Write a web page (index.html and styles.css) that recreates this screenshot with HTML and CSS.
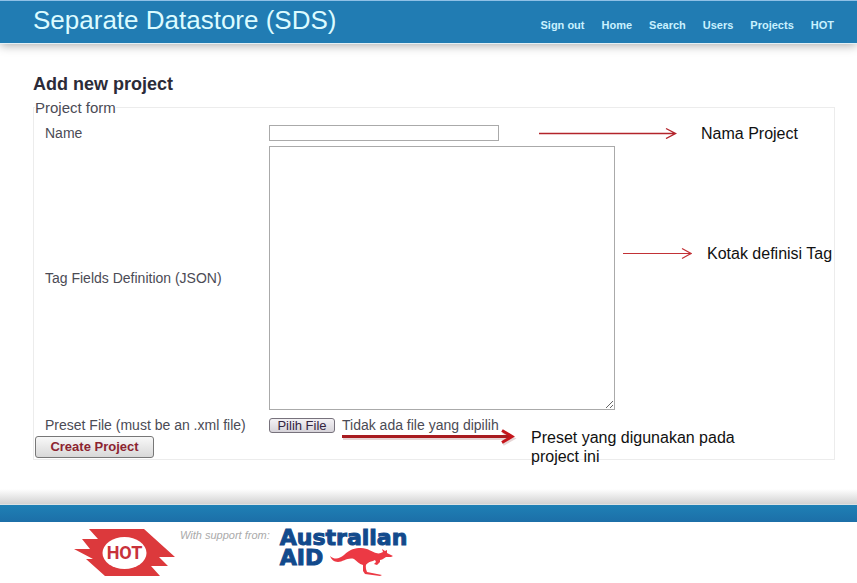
FILE: index.html
```html
<!DOCTYPE html>
<html lang="id">
<head>
<meta charset="utf-8">
<meta name="viewport" content="width=device-width, initial-scale=1">
<title>Separate Datastore (SDS)</title>
<link rel="stylesheet" href="styles.css">
</head>
<body>
<header class="topbar">
  <div class="brand">Separate Datastore (SDS)</div>
  <nav class="nav">
    <a href="#">Sign out</a>
    <a href="#">Home</a>
    <a href="#">Search</a>
    <a href="#">Users</a>
    <a href="#">Projects</a>
    <a href="#">HOT</a>
  </nav>
</header>

<main class="content">
  <h1>Add new project</h1>
  <form>
    <fieldset class="project-form">
      <legend>Project form</legend>
      <div class="row">
        <label for="name">Name</label>
        <div class="field">
          <input class="name" id="name" type="text">
          <div class="note note-name">
            <svg width="138" height="12" viewBox="0 0 138 12" fill="none" stroke="#b3242b" stroke-width="1.4"><path d="M0 6.5H136M127 1.5L136.500 6.500L127 11.500"/></svg>
            <span>Nama Project</span>
          </div>
        </div>
      </div>
      <div class="row">
        <label for="tags">Tag Fields Definition (JSON)</label>
        <div class="field">
          <textarea class="tags" id="tags"></textarea>
          <div class="note note-tags">
            <svg width="69" height="13" viewBox="0 0 69 13" fill="none" stroke="#c23136" stroke-width="1.2"><path d="M0 6.500H67M59 1.500L68 6.500L59 11.500"/></svg>
            <span>Kotak definisi Tag</span>
          </div>
        </div>
      </div>
      <div class="row row-file">
        <label for="preset">Preset File (must be an .xml file)</label>
        <div class="field">
          <button class="pick" id="preset" type="button">Pilih File</button>
          <span class="picked">Tidak ada file yang dipilih</span>
          <div class="note note-preset">
            <svg width="175" height="18" viewBox="0 0 175 18" fill="none"><path d="M1 10.500H170M161 4.500L171.500 10.500L161 16.500" stroke="#e6d6d6" stroke-width="3"/><path d="M0 8.500H168" stroke="#a81c20" stroke-width="3"/><path d="M160 2.500L170 8.500L160 14.500" stroke="#c5161c" stroke-width="3"/></svg>
            <span>Preset yang digunakan pada project ini</span>
          </div>
        </div>
      </div>
      <button class="create" type="submit">Create Project</button>
    </fieldset>
  </form>
</main>

<footer class="footer">
  <div class="band"></div>
  <div class="logos">
    <svg class="hot" width="101" height="48" viewBox="0 0 101 48" role="img" aria-label="HOT">
      <path d="M15 0H70L101 28H85L94 37H77L86 47H31L12 30H19L0 20H16L8 10H24Z" fill="#dc393c"/>
      <ellipse cx="50.500" cy="24" rx="22" ry="16" fill="#fff"/>
      <text x="50.500" y="30" text-anchor="middle" class="hot-text">HOT</text>
    </svg>
    <span class="support">With support from:</span>
    <div class="aid">
      <span>Australian</span>
      <div class="aid-line">
        <span>AID</span>
        <svg width="64" height="29" viewBox="0 0 64 29" aria-hidden="true"><path d="M0 9C5 13 9 12 14 8C20 2 25 1 31 1C38 1 42 5 46 6C49 7 51 6 53 5L52 2L55 4L57 3L57 6L63 9L61 10L56 10C53 12 52 13 50 13L50 15L47 18L44 17L46 15L45 13C42 15 40 14 38 16C35 18 36 19 36 22L37 25L52 28L50 29L35 27L33 24L33 18C29 17 27 14 24 12C18 10 13 15 8 15C4 15 1 12 0 9Z" fill="#ec3944"/></svg>
      </div>
    </div>
  </div>
</footer>
</body>
</html>
```

FILE: styles.css
```css
* { box-sizing: border-box; }

body {
  margin: 0;
  background: #fff;
  color: #4b4b55;
  font-family: "Liberation Sans", Arial, sans-serif;
  font-size: 14px;
}

.topbar {
  display: flex;
  justify-content: space-between;
  height: 43px;
  padding: 0 23px 0 33px;
  background: #217cb3;
  border-top: 1px solid #8fc0e6;
  box-shadow: 0 1px 0 #e4f0f5, 0 2px 10px #a5a5a5;
}

.brand {
  color: #dcfbff;
  font-size: 26px;
  line-height: 38px;
}

.nav {
  display: flex;
  gap: 17px;
  padding-top: 16px;
  line-height: 16px;
}

.nav a {
  color: #c9f1ff;
  font-size: 11px;
  font-weight: bold;
  text-decoration: none;
}

.content { padding: 30px 22px 0 33px; }

h1 {
  margin: 0 0 4px;
  color: #2b2b38;
  font-size: 18px;
  line-height: 22px;
}

.project-form {
  margin: 0;
  padding: 9px 1px 1px;
  border: 1px solid #ececec;
}

legend {
  padding: 0;
  font-size: 15px;
  line-height: 17px;
}

.row {
  display: grid;
  grid-template-columns: 224px 1fr;
  align-items: center;
  margin-bottom: 5px;
  padding-left: 10px;
  line-height: 16px;
}

.row-file {
  margin: 7px 0 3px;
}

.field {
  position: relative;
  display: flex;
  align-items: center;
}

.name {
  width: 230px;
  height: 16px;
  padding: 0 2px;
  border: 1px solid #aaa;
}

.tags {
  display: block;
  width: 346px;
  height: 264px;
  border: 1px solid #aaa;
  resize: both;
}

.note {
  display: flex;
  align-items: center;
  color: #111;
  font-size: 16px;
  line-height: 19px;
  white-space: nowrap;
}

.note svg { flex: none; }

.note-name {
  gap: 24px;
  height: 16px;
  margin-left: 40px;
}

.note-tags {
  gap: 15px;
  margin: -50px 0 0 8px;
}

.note-preset {
  position: absolute;
  top: 11px;
  left: 73px;
  align-items: flex-start;
  gap: 14px;
  white-space: normal;
}

.note-preset span { width: 210px; }

.pick {
  width: 66px;
  height: 15px;
  padding: 0;
  border: 1px solid #77727c;
  border-radius: 3px;
  background: linear-gradient(#f4f2f5, #d6d3d9);
  color: #33243f;
  font: 13px/13px "Liberation Sans", Arial, sans-serif;
}

.picked { margin-left: 7px; }

.create {
  display: block;
  width: 119px;
  height: 22px;
  padding: 0;
  border: 1px solid #777;
  border-radius: 3px;
  background: linear-gradient(#f8f8f8, #d8d8d8);
  color: #8c2430;
  font: bold 13px/18px "Liberation Sans", Arial, sans-serif;
}

.footer { margin-top: 29px; }

.band {
  height: 33px;
  border-top: 16px solid transparent;
  background: linear-gradient(#1f80b5, #1c6fa8) padding-box,
    linear-gradient(#fff, #d2d2d2 15px, #e6f2f5 16px, #fff 17px) border-box;
}

.logos {
  display: flex;
  align-items: flex-start;
  padding: 7px 0 0 74px;
}

.hot-text {
  fill: #c8323a;
  font: bold 18px Roboto, sans-serif;
}

.support {
  margin-left: 5px;
  color: #aaa;
  font-size: 11px;
  font-style: italic;
  line-height: 12px;
}

.aid {
  margin-left: 10px;
  color: #124a8c;
  font: bold 22px/18px "DejaVu Sans", Verdana, sans-serif;
  -webkit-text-stroke: 1px #124a8c;
}

.aid-line {
  display: flex;
  gap: 7px;
  height: 30px;
  line-height: 22px;
}
```
